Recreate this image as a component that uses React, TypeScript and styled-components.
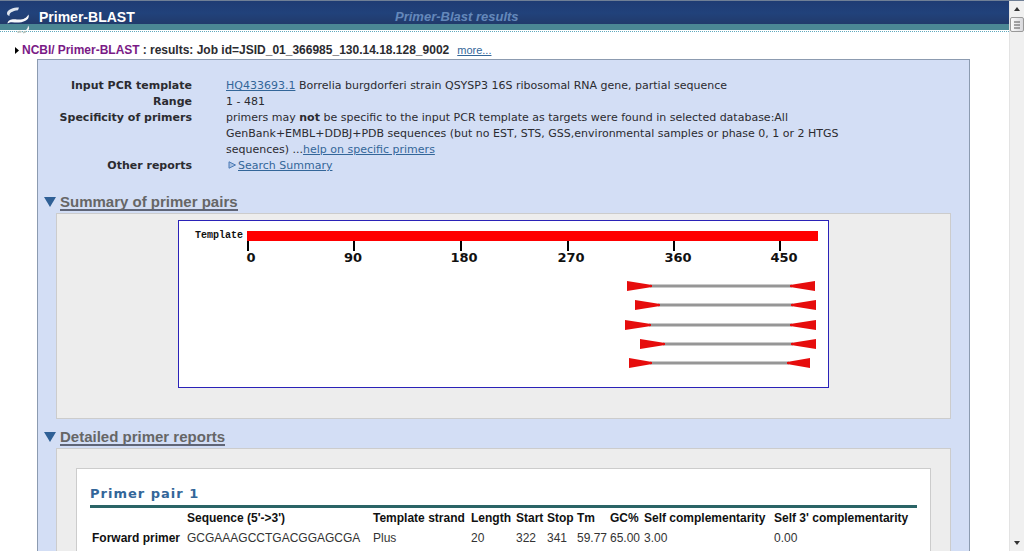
import React from "react";
import styled, { createGlobalStyle } from "styled-components";

const sans = `"Liberation Sans", Arial, Helvetica, sans-serif`;
const wide = `"DejaVu Sans", Verdana, sans-serif`;

const GlobalStyle = createGlobalStyle`
  *, *::before, *::after { box-sizing: border-box; }
  body { margin: 0; background: #fff; color: #2b2b30; font: 12px/16px ${sans}; }
`;

const Window = styled.div`
  display: flex;
  height: 100vh;
  overflow: hidden;
  border-top: 1px solid #6f7f96;
`;

const Page = styled.div`
  flex: 1;
  min-width: 0;
  overflow: hidden;
`;

const Banner = styled.header`
  display: grid;
  grid-template-columns: 39px 356px 1fr;
  align-items: center;
  height: 29px;
  padding-bottom: 5px;
  background: linear-gradient(#1f3c74, #21427b 12px, #213a6b 23px, #4b8794 23px, #4b8794 29px);
`;

const Logo = styled.svg`
  align-self: start;
  width: 32px;
  height: 34px;
`;

const BannerTitle = styled.h1`
  margin: 0 0 2px;
  color: #fff;
  font-size: 14px;
`;

const BannerSubtitle = styled.span`
  margin-bottom: 2px;
  color: #6488bb;
  font: italic bold 13px/16px ${sans};
`;

const DottedRule = styled.div`
  height: 2px;
  border-bottom: 1px dotted #5fa8bd;
`;

const Trail = styled.nav`
  display: flex;
  align-items: center;
  padding: 10px 0 1px 14px;
  font-weight: bold;
  white-space: pre;
`;

const TrailMark = styled.svg`
  width: 5px;
  height: 7px;
  margin-right: 3px;
`;

const TrailLink = styled.a`
  margin-right: 3px;
  color: #7a1a86;
  text-decoration: none;
`;

const Link = styled.a`
  color: #336699;
  text-decoration: underline;
`;

const MoreLink = styled(Link)`
  margin-left: 8px;
  font-size: 11px;
  font-weight: normal;
`;

const Report = styled.main`
  margin: 0 39px 0 37px;
  padding: 18px 18px 0;
  min-height: 100vh;
  border: 1px solid #8c9bb0;
  background: #d3def5;
`;

const Facts = styled.dl`
  display: grid;
  grid-template-columns: 136px minmax(0, 650px);
  column-gap: 34px;
  margin: 0;
  font: 11px/16px ${wide};
`;

const FactName = styled.dt`
  text-align: right;
  font-weight: bold;
`;

const FactValue = styled.dd`
  margin: 0;
`;

const SummaryMark = styled.svg`
  width: 9px;
  height: 8px;
  margin: 0 1px 0 2px;
`;

const Section = styled.section`
  padding-top: 8px;
`;

const FactsSection = styled.section`
  padding-bottom: 10px;
`;

const SectionHead = styled.h2`
  display: flex;
  align-items: center;
  gap: 4px;
  margin: 0 0 0 -12px;
  height: 20px;
  font-size: 15px;
`;

const SectionToggle = styled.button`
  padding: 0;
  border: 0;
  border-bottom: 2px solid #5f6577;
  background: none;
  color: #666;
  font: bold 15px/15px ${sans};
  cursor: pointer;
`;

const Box = styled.div`
  margin-top: 1px;
  border: 1px solid #ccc;
  background: #ededed;
`;

const GraphBox = styled(Box)`
  padding: 6px 6px 30px;
`;

const Graph = styled.svg`
  display: block;
  width: 651px;
  max-width: 100%;
  height: 168px;
  margin: 0 auto;
`;

const DetailBox = styled(Box)`
  min-height: 100vh;
  padding: 19px;
`;

const Card = styled.div`
  min-height: 100vh;
  padding: 16px 13px;
  border: 1px solid #ccc;
  background: #fff;
`;

const PairTitle = styled.h3`
  margin: 0;
  padding-bottom: 3px;
  border-bottom: 3px solid #2a6466;
  color: #336699;
  font: bold 13px/17px ${wide};
  letter-spacing: 1px;
`;

const PrimerTable = styled.table`
  width: 100%;
  table-layout: fixed;
  border-collapse: collapse;
  white-space: nowrap;

  th, td { height: 20px; padding: 0; text-align: left; }
  th { color: #111; }
  tbody th { padding-left: 2px; }
  td { color: #333; }
`;

const Column = styled.col<{ $width?: number }>`
  width: ${(p) => (p.$width ? `${p.$width}px` : "auto")};
`;

const ScrollBar = styled.div`
  display: flex;
  flex-direction: column;
  width: 15px;
  border-left: 1px solid #e3e3e3;
  background: #f0f0f0;
`;

const ScrollButton = styled.button`
  display: grid;
  place-items: center;
  height: 16px;
  padding: 0;
  border: 0;
  background: none;
`;

const ScrollThumb = styled.div`
  display: grid;
  place-items: center;
  height: 15px;
  border: 1px solid #999;
  border-radius: 2px;
  background: linear-gradient(90deg, #fafafa, #d8d8dc);
`;

const ScrollSpace = styled.div`
  flex: 1;
`;

const ticks = [
  { at: 70, text: 73, label: "0" },
  { at: 176, text: 175, label: "90" },
  { at: 283, text: 286, label: "180" },
  { at: 390, text: 393, label: "270" },
  { at: 496, text: 500, label: "360" },
  { at: 602, text: 606, label: "450" },
];

const pairs = [
  { y: 66, from: 449, to: 637, tip: 25 },
  { y: 85, from: 457, to: 638, tip: 25 },
  { y: 105, from: 447, to: 638, tip: 26 },
  { y: 124, from: 462, to: 638, tip: 25 },
  { y: 143, from: 451, to: 632, tip: 23 },
];

const columns = [
  { title: "", width: 97, value: "Forward primer" },
  { title: "Sequence (5'->3')", width: 186, value: "GCGAAAGCCTGACGGAGCGA" },
  { title: "Template strand", width: 98, value: "Plus" },
  { title: "Length", width: 45, value: "20" },
  { title: "Start", width: 31, value: "322" },
  { title: "Stop", width: 30, value: "341" },
  { title: "Tm", width: 33, value: "59.77" },
  { title: "GC%", width: 34, value: "65.00" },
  { title: "Self complementarity", width: 130, value: "3.00" },
  { title: "Self 3' complementarity", value: "0.00" },
];

function PrimerGraph() {
  return (
    <Graph viewBox="0 0 651 168" role="img" aria-label="Primer pairs on template">
      <rect x="0.5" y="0.5" width="650" height="167" fill="#fff" stroke="#2a22b8" />
      <text x="17" y="18" fontFamily='"Liberation Mono", monospace' fontWeight="bold" fontSize="10" fill="#111">
        Template
      </text>
      <rect x="69" y="11" width="571" height="10" fill="#f00" />
      {ticks.map((t) => (
        <g key={t.label}>
          <rect x={t.at - 1} y="21" width="2" height="10" fill="#000" />
          <text x={t.text} y="42" textAnchor="middle" fontFamily={wide} fontWeight="bold" fontSize="13" fill="#111">
            {t.label}
          </text>
        </g>
      ))}
      {pairs.map((p) => (
        <g key={p.y} fill="#e60d0d">
          <rect x={p.from + p.tip - 2} y={p.y - 1.5} width={p.to - p.from - 2 * p.tip + 4} height="3" fill="#969696" />
          <path d={`M${p.from} ${p.y - 5}L${p.from + p.tip} ${p.y - 1}v2L${p.from} ${p.y + 5}z`} />
          <path d={`M${p.to} ${p.y - 5}L${p.to - p.tip} ${p.y - 1}v2L${p.to} ${p.y + 5}z`} />
        </g>
      ))}
    </Graph>
  );
}

function SectionTitle({ children }: { children: React.ReactNode }) {
  return (
    <SectionHead>
      <svg width="12" height="10" viewBox="0 0 12 10" aria-hidden="true">
        <path d="M0 0h12L6 10z" fill="#2f6096" />
      </svg>
      <SectionToggle type="button">{children}</SectionToggle>
    </SectionHead>
  );
}

export default function App() {
  return (
    <>
      <GlobalStyle />
      <Window>
        <Page>
          <Banner>
            <Logo viewBox="0 0 32 34" aria-hidden="true">
              <path d="M19 6.500C13 6.500 7.500 8.500 7 12c-.200 1.500.800 2.500 2.500 3C9 12 12 10 18 9.200z" fill="#dfe5ee" />
              <path d="M7.500 22.500C8 18.500 12 18 17 18.500c6 .500 9-1 11.500-5C30 17.500 26 21 19 21.500c-5 .300-8-1.500-11.500 1z" fill="#f7f8fb" />
              <path d="M28 24.500c2 3 1.500 5-3 5 2-1 3-2.500 3-5z" fill="#f0f3f5" />
              <path d="M17.500 31.500c1.500-1 3-1 4-.300M23 32c1-.800 2-1.300 3-1" fill="none" stroke="#b9c4bd" strokeWidth="1.600" />
            </Logo>
            <BannerTitle>Primer-BLAST</BannerTitle>
            <BannerSubtitle>Primer-Blast results</BannerSubtitle>
          </Banner>
          <DottedRule />
          <Trail>
            <TrailMark viewBox="0 0 5 7" aria-hidden="true">
              <path d="M1 0l4 3.500L1 7z" fill="#000" />
            </TrailMark>
            <TrailLink href="#ncbi">NCBI/</TrailLink>
            <TrailLink href="#primer-blast">Primer-BLAST</TrailLink>
            <span>: results: Job id=JSID_01_366985_130.14.18.128_9002</span>
            <MoreLink href="#more">more...</MoreLink>
          </Trail>
          <Report>
            <FactsSection>
              <Facts>
                <FactName>Input PCR template</FactName>
                <FactValue>
                  <Link href="#HQ433693.1">HQ433693.1</Link> Borrelia burgdorferi strain QSYSP3 16S ribosomal RNA gene, partial sequence
                </FactValue>
                <FactName>Range</FactName>
                <FactValue>1 - 481</FactValue>
                <FactName>Specificity of primers</FactName>
                <FactValue>
                  primers may <b>not</b> be specific to the input PCR template as targets were found in selected database:All
                  GenBank+EMBL+DDBJ+PDB sequences (but no EST, STS, GSS,environmental samples or phase 0, 1 or 2 HTGS
                  sequences) ...<Link href="#help">help on specific primers</Link>
                </FactValue>
                <FactName>Other reports</FactName>
                <FactValue>
                  <SummaryMark viewBox="0 0 9 8" aria-hidden="true">
                    <path d="M1 .800L7.500 4 1 7.200z" fill="#a9bfe0" stroke="#4a7ab5" />
                  </SummaryMark>
                  <Link href="#search">Search Summary</Link>
                </FactValue>
              </Facts>
            </FactsSection>

            <Section>
              <SectionTitle>Summary of primer pairs</SectionTitle>
              <GraphBox>
                <PrimerGraph />
              </GraphBox>
            </Section>

            <Section>
              <SectionTitle>Detailed primer reports</SectionTitle>
              <DetailBox>
                <Card>
                  <PairTitle>Primer pair 1</PairTitle>
                  <PrimerTable>
                    <colgroup>
                      {columns.map((c) => (
                        <Column key={c.title} $width={c.width} />
                      ))}
                    </colgroup>
                    <thead>
                      <tr>
                        {columns.map((c) => (
                          <th key={c.title} scope="col">{c.title}</th>
                        ))}
                      </tr>
                    </thead>
                    <tbody>
                      <tr>
                        {columns.map((c, i) =>
                          i === 0 ? (
                            <th key={c.title} scope="row">{c.value}</th>
                          ) : (
                            <td key={c.title}>{c.value}</td>
                          )
                        )}
                      </tr>
                    </tbody>
                  </PrimerTable>
                </Card>
              </DetailBox>
            </Section>
          </Report>
        </Page>
        <ScrollBar>
          <ScrollButton type="button" aria-label="Scroll up">
            <svg width="6" height="4" viewBox="0 0 6 4"><path d="M0 4l3-4 3 4z" fill="#333" /></svg>
          </ScrollButton>
          <ScrollThumb>
            <svg width="6" height="8" viewBox="0 0 6 8"><path d="M0 1h6M0 4h6M0 7h6" stroke="#555" /></svg>
          </ScrollThumb>
          <ScrollSpace />
          <ScrollButton type="button" aria-label="Scroll down">
            <svg width="6" height="4" viewBox="0 0 6 4"><path d="M0 0l3 4 3-4z" fill="#333" /></svg>
          </ScrollButton>
        </ScrollBar>
      </Window>
    </>
  );
}
